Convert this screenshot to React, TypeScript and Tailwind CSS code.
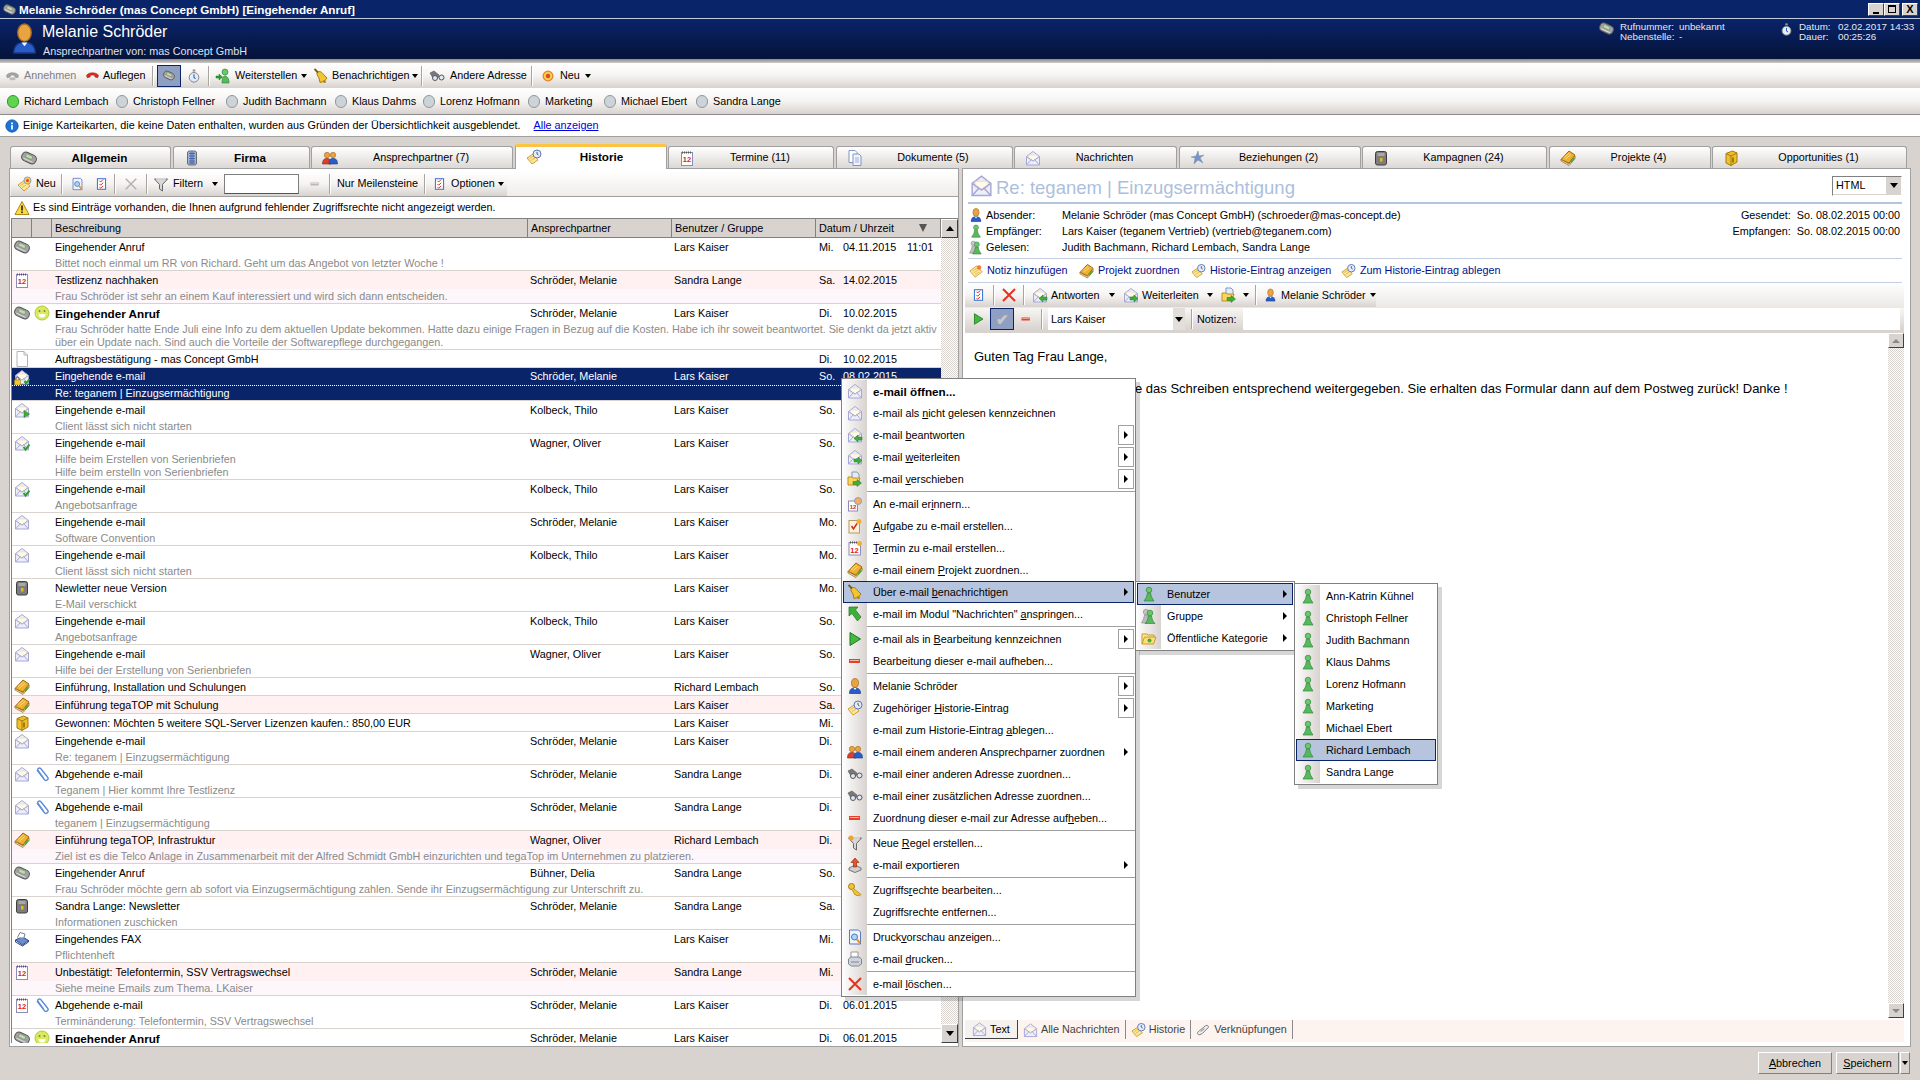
import type { ReactNode } from "react";

const DITHER = "bg-[repeating-conic-gradient(#d8d3cf_0_25%,#ffffff_0_50%)] bg-[length:2px_2px]";
const BAR = "bg-gradient-to-b from-white via-[#f6f4f2] to-[#d8d3cf]";

function Svg({ c = "h-4 w-4", children }: { c?: string; children: ReactNode }) {
  return (
    <svg viewBox="0 0 16 16" className={`${c} shrink-0`} aria-hidden="true">
      {children}
    </svg>
  );
}

type IconProps = { c?: string };

function Phone({ c }: IconProps) {
  return (
    <Svg c={c}>
      <g transform="rotate(25 8 8)">
        <rect x="0.500" y="3.500" width="15" height="9" rx="4" fill="#a3a3a3" stroke="#555" />
        <rect x="4" y="5" width="7" height="3.500" fill="#bcdcae" stroke="#6b7a64" strokeWidth=".5" />
        <path d="M3 10.500h10" stroke="#e4e4e4" />
      </g>
    </Svg>
  );
}

function Mail({ c, badge }: IconProps & { badge?: "reply" | "fwd" | "check" | "lock" | "play" }) {
  return (
    <Svg c={c}>
      <path d="M1.500 6.500 8 1.500l6.500 5V15h-13z" fill="#eceefb" stroke="#a7a7d6" />
      <path d="M3.500 5h9v4L8 11.500 3.500 9z" fill="#fff9e8" stroke="#d8d0b8" strokeWidth=".5" />
      <path d="M1.500 15 6.500 9.500M14.500 15 9.500 9.500M1.500 6.500 8 11l6.500-4.500" fill="none" stroke="#a7a7d6" />
      {badge === "reply" && <path d="M7 11.500 11 8v2h4v3h-4v2z" fill="#3fae3c" stroke="#1c7a1c" strokeWidth=".5" />}
      {badge === "fwd" && <path d="M15 11.500 11 8v2H7v3h4v2z" fill="#3fae3c" stroke="#1c7a1c" strokeWidth=".5" />}
      {badge === "play" && <path d="M10 8.500 15.500 12 10 15.500z" fill="#3fae3c" stroke="#1c7a1c" strokeWidth=".5" />}
      {badge === "check" && <path d="M9.500 12 11.500 14.500 15.500 9.500" fill="none" stroke="#27a02a" strokeWidth="2" />}
      {badge === "lock" && (
        <>
          <path d="M10.500 12 12 14.500 15.500 10" fill="none" stroke="#27a02a" strokeWidth="2" />
          <rect x="0.500" y="11" width="6" height="5" fill="#f2c82e" stroke="#a07c10" strokeWidth=".5" />
          <path d="M2 11V9.500a1.500 1.500 0 0 1 3 0V11" fill="none" stroke="#555" />
        </>
      )}
    </Svg>
  );
}

function Cal({ c }: IconProps) {
  return (
    <Svg c={c}>
      <rect x="2.500" y="2.500" width="11" height="13" fill="#fff" stroke="#8c8cb4" />
      <path d="M3 2.500h10" stroke="#555" strokeWidth="2" strokeDasharray="1 1" />
      <text x="8" y="12" fontSize="7.500" fontWeight="700" fill="#d22" textAnchor="middle" fontFamily="Liberation Sans, sans-serif">
        12
      </text>
    </Svg>
  );
}

function Doc({ c }: IconProps) {
  return (
    <Svg c={c}>
      <path d="M3 .5h7l3.500 3.500v11.500H3z" fill="#fff" stroke="#b4b4b4" />
      <path d="M10 .5V4h3.500" fill="none" stroke="#b4b4b4" />
    </Svg>
  );
}

function Book({ c }: IconProps) {
  return (
    <Svg c={c}>
      <path d="M1 9.500 9 1l6 4-6 8z" fill="#efb02e" stroke="#9b6a12" />
      <path d="M4 7.500 9.500 3M5.500 9 11 4.500" stroke="#f8dc8a" />
      <path d="M1 9.500 9 14l6-8v2.500L9 15.500 1 11z" fill="#fff" stroke="#9b6a12" strokeWidth=".8" />
      <path d="M11 12.500l3.500-4.500" stroke="#3fae3c" strokeWidth="1.500" />
    </Svg>
  );
}

function Box({ c }: IconProps) {
  return (
    <Svg c={c}>
      <rect x="2.500" y="1.500" width="11" height="13.500" rx="2" fill="#7d7d7d" stroke="#3e3e3e" />
      <rect x="4.500" y="3" width="7" height="3" fill="#a8a8a8" />
      <rect x="7" y="8" width="2.500" height="3.500" fill="#e8b820" />
    </Svg>
  );
}

function Cube({ c }: IconProps) {
  return (
    <Svg c={c}>
      <path d="M3 3.500 9.500 1 14 3v9l-6 3.500L3 13z" fill="#eec02a" stroke="#a37a10" />
      <path d="M3 3.500 8 6v9.500M8 6l6-3" fill="none" stroke="#a37a10" />
      <path d="M10 7.500v5" stroke="#8a6208" strokeWidth="1.500" />
    </Svg>
  );
}

function Fax({ c }: IconProps) {
  return (
    <Svg c={c}>
      <path d="M1.500 9 8 5.500l6.500 4-6 4.500z" fill="#6c8ccc" stroke="#2f4a86" />
      <path d="M3.500 6.500 6 1.500l5 1.500-1 3.500" fill="#fff" stroke="#808080" />
      <path d="M1.500 9v2l7 4 6-4V9" fill="none" stroke="#2f4a86" />
    </Svg>
  );
}

function Clip({ c }: IconProps) {
  return (
    <Svg c={c}>
      <path d="M9.500 12 4 4.500a1.700 1.700 0 0 1 2.700-2L13.500 11a2 2 0 0 1-3 2.700L3 4" fill="none" stroke="#5d8cd8" strokeWidth="1.400" />
    </Svg>
  );
}

function Smile({ c }: IconProps) {
  return (
    <Svg c={c}>
      <circle cx="8" cy="8" r="7" fill="#d9ea5e" stroke="#b2c83e" />
      <circle cx="5.500" cy="6" r="1" fill="#7c8a28" />
      <circle cx="10.500" cy="6" r="1" fill="#7c8a28" />
      <path d="M4.500 9h7a3.500 3.500 0 0 1-7 0z" fill="#fff" />
    </Svg>
  );
}

function Person({ c }: IconProps) {
  return (
    <Svg c={c}>
      <ellipse cx="8" cy="5" rx="3.500" ry="4.500" fill="#e8a343" stroke="#a8681c" strokeWidth=".7" />
      <path d="M2.500 15.500c0-4 2-5.500 5.500-5.500s5.500 1.500 5.500 5.500z" fill="#2a5cc8" stroke="#183a88" strokeWidth=".7" />
      <path d="M6.500 10 8 12l1.500-2z" fill="#fff" />
    </Svg>
  );
}

function Pawn({ c, gray }: IconProps & { gray?: boolean }) {
  return (
    <Svg c={c}>
      {gray && (
        <g transform="translate(-3 0)">
          <circle cx="8" cy="4" r="2.700" fill="#c4c4c4" stroke="#888" strokeWidth=".6" />
          <path d="M6.500 7h3l1 4 2 4h-9l2-4z" fill="#bcbcbc" stroke="#888" strokeWidth=".6" />
        </g>
      )}
      <g transform={gray ? "translate(1 1)" : undefined}>
        <circle cx="8" cy="4" r="2.800" fill="#6cc66c" stroke="#2e8a3e" strokeWidth=".7" />
        <path d="M6.500 7h3l1 4 2.500 4H3l2.500-4z" fill="#58b85c" stroke="#2e8a3e" strokeWidth=".7" />
      </g>
    </Svg>
  );
}

function People({ c }: IconProps) {
  return (
    <Svg c={c}>
      <circle cx="5" cy="5" r="2.700" fill="#e8a343" stroke="#a8681c" strokeWidth=".6" />
      <path d="M.500 14c0-4 1.500-5.500 4.500-5.500S9 10 9 14z" fill="#d8402c" stroke="#8a2418" strokeWidth=".6" />
      <circle cx="11" cy="5" r="2.700" fill="#e8a343" stroke="#a8681c" strokeWidth=".6" />
      <path d="M7 14c0-4 1-5.500 4-5.500s4.500 1.500 4.500 5.500z" fill="#2a5cc8" stroke="#183a88" strokeWidth=".6" />
    </Svg>
  );
}

function Bell({ c }: IconProps) {
  return (
    <Svg c={c}>
      <path d="M4 4.500C6.500 2.500 9 4 10.500 6.500L14 10c-1.500 2.500-4 4-7 4.500L6 10C4.500 8 3.500 6 4 4.500z" fill="#f2c430" stroke="#a87c10" />
      <path d="M1.500 1 5 4.500" stroke="#7a5a18" strokeWidth="1.800" />
      <circle cx="11.500" cy="13.500" r="1.500" fill="#b8860b" />
    </Svg>
  );
}

function Jump({ c }: IconProps) {
  return (
    <Svg c={c}>
      <path d="M2 1h9L8.500 4 14 11l-3.500 4L5 7.500 2 10z" fill="#3fae3c" stroke="#1c7a1c" strokeWidth=".7" />
    </Svg>
  );
}

function Play({ c }: IconProps) {
  return (
    <Svg c={c}>
      <path d="M3 1.500 13.500 8 3 14.500z" fill="#45b83f" stroke="#1c7a1c" />
    </Svg>
  );
}

function Minus({ c }: IconProps) {
  return (
    <Svg c={c}>
      <rect x="2" y="6" width="11" height="4" fill="#e8402a" />
      <rect x="3" y="7" width="9" height="1" fill="#f8b8a8" />
    </Svg>
  );
}

function Funnel({ c, spark }: IconProps & { spark?: boolean }) {
  return (
    <Svg c={c}>
      <path d="M1.500 3h13L9.500 8.500V15L6.500 13V8.500z" fill="#d8d8d8" stroke="#666" />
      <path d="M3 3h10" stroke="#fff" />
      {spark && <circle cx="4" cy="3" r="2.500" fill="#f2a030" />}
    </Svg>
  );
}

function Exporter({ c }: IconProps) {
  return (
    <Svg c={c}>
      <path d="M2 11 8 8l6 3v2l-6 2.500L2 13z" fill="#cfcfcf" stroke="#777" />
      <path d="M8 1l4 4.500H9.500V10h-3V5.500H4z" fill="#e2562a" stroke="#9a2e10" strokeWidth=".7" />
    </Svg>
  );
}

function Key({ c }: IconProps) {
  return (
    <Svg c={c}>
      <circle cx="4.500" cy="4.500" r="3" fill="#f2c430" stroke="#a87c10" />
      <path d="M6.500 6.500 14 12.500l-1.500 1.500-1.500-1-1 1-1-1.500-1 .5-3-5.500" fill="#f2c430" stroke="#a87c10" strokeWidth=".7" />
    </Svg>
  );
}

function Preview({ c }: IconProps) {
  return (
    <Svg c={c}>
      <path d="M2.500 1h9l2 2v12h-11z" fill="#eef3fc" stroke="#5c78b8" />
      <circle cx="7.500" cy="8" r="3" fill="#a8d8f4" stroke="#4a78b8" />
      <path d="M10 10.500l3 3.500" stroke="#e8902a" strokeWidth="2" />
    </Svg>
  );
}

function Printer({ c }: IconProps) {
  return (
    <Svg c={c}>
      <path d="M4 1h7v6H4z" fill="#fff" stroke="#999" />
      <path d="M1.500 8 4 6h8l2.500 2v5l-3 2h-7l-3-2z" fill="#cfd3da" stroke="#7f8690" />
      <path d="M4 11h8" stroke="#7f8690" />
    </Svg>
  );
}

function Cross({ c, gray }: IconProps & { gray?: boolean }) {
  return (
    <Svg c={c}>
      <path d="M2 2l12 12M14 2 2 14" stroke={gray ? "#b9b5b1" : "#e8301c"} strokeWidth="2" fill="none" />
    </Svg>
  );
}

function Binoculars({ c }: IconProps) {
  return (
    <Svg c={c}>
      <path d="M1 5l4-2 5 4-1 3-3-1-2 1z" fill="#77797e" stroke="#555" strokeWidth=".6" />
      <circle cx="6" cy="10" r="2.500" fill="#dfe8f4" stroke="#555" />
      <circle cx="12.500" cy="9.500" r="2.500" fill="#dfe8f4" stroke="#555" />
    </Svg>
  );
}

function Note({ c }: IconProps) {
  return (
    <Svg c={c}>
      <path d="M1 8 9 2l6 7-8 6z" fill="#fbe79a" stroke="#d0a030" />
      <path d="M4 8l5-3M5.500 10l5-3M7 12l5-3" stroke="#e0a030" strokeWidth=".7" />
      <circle cx="11.500" cy="4" r="2.500" fill="#f27a3a" />
    </Svg>
  );
}

function History({ c }: IconProps) {
  return (
    <Svg c={c}>
      <path d="M1 9 7 5l5 6-6 4z" fill="#fbe79a" stroke="#d0a030" />
      <path d="M3.500 9.500l4-2.500M5 11.500l4-2.500" stroke="#e0a030" strokeWidth=".7" />
      <circle cx="11" cy="5" r="4" fill="#e4ecf8" stroke="#5c78b8" />
      <path d="M11 2.800V5l1.500 1" fill="none" stroke="#334" strokeWidth=".8" />
    </Svg>
  );
}

function Checklist({ c }: IconProps) {
  return (
    <Svg c={c}>
      <rect x="3" y="1.500" width="10" height="13" fill="#fff" stroke="#3a78d8" strokeWidth="1.300" />
      <path d="M5.500 4l1.500 1.500L10 2.500M5.500 8l1.500 1.500L10 6.500M5.500 12l1.500 1L10 10.500" fill="none" stroke="#d8281c" strokeWidth="1.200" />
    </Svg>
  );
}

function FolderGo({ c }: IconProps) {
  return (
    <Svg c={c}>
      <path d="M5 1h5l2 2v5H5z" fill="#e4ecf8" stroke="#7f96c4" />
      <path d="M1 14V6h4l1 1h7l-2 7z" fill="#fbd65e" stroke="#bb9020" />
      <path d="M6 10.500h4V8.500l4.500 3.500L10 15.500v-2H6z" fill="#3fae3c" stroke="#1c7a1c" strokeWidth=".5" />
    </Svg>
  );
}

function Folder({ c }: IconProps) {
  return (
    <Svg c={c}>
      <path d="M1 14V4h5l1 1h6v2" fill="#fbe79a" stroke="#c89a28" />
      <path d="M1 14l2.500-7H15l-2.500 7z" fill="#fbdf7a" stroke="#c89a28" />
      <circle cx="8.500" cy="10.500" r="2" fill="#3fae3c" />
    </Svg>
  );
}

function Remind({ c }: IconProps) {
  return (
    <Svg c={c}>
      <rect x="1.500" y="5" width="9" height="10" fill="#fff" stroke="#8c8cb4" />
      <text x="6" y="13" fontSize="6" fontWeight="700" fill="#d22" textAnchor="middle" fontFamily="Liberation Sans, sans-serif">
        12
      </text>
      <circle cx="11" cy="5" r="3.500" fill="#f2b05a" stroke="#9a9ab8" />
    </Svg>
  );
}

function TaskNew({ c }: IconProps) {
  return (
    <Svg c={c}>
      <rect x="2" y="2.500" width="10.500" height="12.500" fill="#fbf2d8" stroke="#b09a70" />
      <path d="M4.500 8 6.500 11 10 5.500" fill="none" stroke="#d8281c" strokeWidth="1.500" />
      <circle cx="12" cy="3.500" r="2.500" fill="#f2b030" />
    </Svg>
  );
}

function CalNew({ c }: IconProps) {
  return (
    <Svg c={c}>
      <rect x="2" y="2.500" width="11.500" height="12.500" fill="#fff" stroke="#8c8cb4" />
      <path d="M3 2.500h8" stroke="#555" strokeWidth="2" strokeDasharray="1 1" />
      <text x="7.500" y="12.500" fontSize="7.500" fontWeight="700" fill="#d22" textAnchor="middle" fontFamily="Liberation Sans, sans-serif">
        12
      </text>
      <circle cx="12.500" cy="3.500" r="2.500" fill="#f2b030" />
    </Svg>
  );
}

function NewStar({ c }: IconProps) {
  return (
    <Svg c={c}>
      <circle cx="8" cy="8" r="5.500" fill="#f6d24a" stroke="#e8822a" strokeWidth="1.500" />
      <circle cx="8" cy="8" r="2.500" fill="#e8402a" />
    </Svg>
  );
}

function NewNote({ c }: IconProps) {
  return (
    <Svg c={c}>
      <path d="M1 9 8 4l5 6-6 5z" fill="#fbe79a" stroke="#d0a030" />
      <path d="M3.500 9.500l4-2.500M5 11.500l4-2.500" stroke="#e0a030" strokeWidth=".7" />
      <circle cx="10.500" cy="4.500" r="3.500" fill="#f6d24a" stroke="#8c9cc8" />
      <circle cx="10.500" cy="4.500" r="1.500" fill="#e8402a" />
    </Svg>
  );
}

function Hangup({ c, gray }: IconProps & { gray?: boolean }) {
  const col = gray ? "#a5a5a5" : "#dc2a1c";
  return (
    <Svg c={c}>
      <path d="M1.500 8C4 4 12 4 14.500 8l-1 2.500-3-1V8c-2-.8-3-.8-5 0v1.500l-3 1z" fill={col} stroke={gray ? "#777" : "#8a1a10"} strokeWidth=".5" />
      {gray && <rect x="5" y="10" width="6" height="3" fill="#bbb" />}
    </Svg>
  );
}

function Transfer({ c }: IconProps) {
  return (
    <Svg c={c}>
      <circle cx="10" cy="4" r="3" fill="#6cc66c" stroke="#2e8a3e" strokeWidth=".7" />
      <path d="M7 15c0-5 1-7 3-7s4 2 4 7z" fill="#58b85c" stroke="#2e8a3e" strokeWidth=".7" />
      <path d="M1 8h3V6l3.500 3L4 12v-2H1z" fill="#2aa02e" stroke="#1c7a1c" strokeWidth=".5" />
    </Svg>
  );
}

function Stopwatch({ c }: IconProps) {
  return (
    <Svg c={c}>
      <rect x="6.500" y="0.500" width="3" height="2.500" fill="#999" />
      <circle cx="8" cy="9.500" r="5.500" fill="#e4ecf8" stroke="#777" />
      <path d="M8 6v4l2 1" stroke="#2a5cc8" fill="none" strokeWidth="1.200" />
    </Svg>
  );
}

function Building({ c }: IconProps) {
  return (
    <Svg c={c}>
      <rect x="3.500" y="1" width="9" height="14" rx="2" fill="#9fb4dc" stroke="#6a6a6a" />
      <path d="M5 3.500h6M5 6h6M5 8.500h6M5 11h6M5 13h6M7 2v12M9 2v12" stroke="#3f5a9c" strokeWidth=".8" />
    </Svg>
  );
}

function Pages({ c }: IconProps) {
  return (
    <Svg c={c}>
      <path d="M2 .5h6l2 2v10H2z" fill="#fff" stroke="#7f96c4" />
      <path d="M6 4h6l2 2v9.500H6z" fill="#eef3fc" stroke="#7f96c4" />
      <path d="M8 8h4M8 10h4M8 12h4" stroke="#7f96c4" strokeWidth=".7" />
    </Svg>
  );
}

function Burst({ c }: IconProps) {
  return (
    <Svg c={c}>
      <path d="M8 1l1 5 5-1-4 3 3 5-5-3-4 4 1-6-4-1 5-1z" fill="#6f94d8" stroke="#8a8a8a" strokeWidth=".5" />
    </Svg>
  );
}

function Chain({ c }: IconProps) {
  return (
    <Svg c={c}>
      <path d="M2 12.500c-1-1 0-3 2-4l6-5c2-1 4 0 3 2l-6 6c-2 1.500-4 2-5 1z" fill="#eee" stroke="#777" />
      <path d="M5 9.500l4-3" stroke="#777" />
    </Svg>
  );
}

function Info({ c }: IconProps) {
  return (
    <Svg c={c}>
      <circle cx="8" cy="8" r="7" fill="#1c74d8" stroke="#0c4aa0" />
      <rect x="7" y="7" width="2" height="5" fill="#fff" />
      <rect x="7" y="4" width="2" height="2" fill="#fff" />
    </Svg>
  );
}

function Warn({ c }: IconProps) {
  return (
    <Svg c={c}>
      <path d="M8 1.500 15 14.500H1z" fill="#fbdc3c" stroke="#b08a10" />
      <rect x="7.200" y="5.500" width="1.600" height="5" fill="#222" />
      <rect x="7.200" y="11.500" width="1.600" height="1.600" fill="#222" />
    </Svg>
  );
}

function Arrow({ c = "border-t-black" }: { c?: string }) {
  return <span className={`inline-block h-0 w-0 shrink-0 border-x-[3px] border-t-[4px] border-x-transparent ${c}`} />;
}

function ArrowRight() {
  return <span className="inline-block h-0 w-0 border-y-[4px] border-l-[4px] border-y-transparent border-l-black" />;
}

function Sep({ c = "h-[20px]" }: { c?: string }) {
  return <span className={`block w-[2px] shrink-0 border-l border-r border-l-[#a8a49f] border-r-white ${c}`} />;
}

// "&" marks the mnemonic letter, same as the Windows resource strings
function Mnemonic({ text }: { text: string }) {
  const i = text.indexOf("&");
  if (i < 0) return <>{text}</>;
  return (
    <>
      {text.slice(0, i)}
      <u>{text[i + 1]}</u>
      {text.slice(i + 2)}
    </>
  );
}

function TitleBar() {
  return (
    <div className="flex h-[18px] shrink-0 items-center bg-[#0a246a] pl-[3px] pr-[2px]">
      <Phone c="h-[13px] w-[13px]" />
      <span className="ml-[3px] flex-1 text-[11.700px] font-bold text-white">Melanie Schröder (mas Concept GmbH) [Eingehender Anruf]</span>
      <div className="flex items-center">
        <WinBtn>
          <span className="mt-[7px] h-[2px] w-[6px] bg-black" />
        </WinBtn>
        <WinBtn>
          <span className="h-[8px] w-[8px] border border-t-2 border-black" />
        </WinBtn>
        <span className="w-[2px]" />
        <WinBtn>
          <span className="text-[11px] font-bold leading-none text-black">X</span>
        </WinBtn>
      </div>
    </div>
  );
}

function WinBtn({ children }: { children: ReactNode }) {
  return (
    <span className="flex h-[13px] w-[16px] items-center justify-center border border-b-[#404040] border-l-white border-r-[#404040] border-t-white bg-[#d8d3cf]">
      {children}
    </span>
  );
}

function Header() {
  return (
    <div className="flex h-[40px] shrink-0 bg-gradient-to-b from-[#0a246a] to-[#05133a] text-white">
      <Person c="ml-[9px] mt-[4px] h-[31px] w-[31px]" />
      <div className="ml-[2px] w-[1557px]">
        <div className="mt-[3px] h-[20px] text-[16px] leading-[20px]">Melanie Schröder</div>
        <div className="mt-[3px] pl-[1px] text-[10.800px] leading-[13px] text-[#dde3f0]">Ansprechpartner von: mas Concept GmbH</div>
      </div>
      <Phone c="mt-[2px] h-[15px] w-[15px]" />
      <div className="ml-[6px] mt-[3px] w-[160px] text-[9.800px] leading-[10px] text-[#e4e8f2]">
        <div className="flex h-[10px]"><span className="w-[59px]">Rufnummer:</span>unbekannt</div>
        <div className="flex h-[10px]"><span className="w-[59px]">Nebenstelle:</span>-</div>
      </div>
      <Stopwatch c="mt-[2px] h-[17px] w-[13px]" />
      <div className="ml-[6px] mt-[3px] text-[9.800px] leading-[10px] text-[#e4e8f2]">
        <div className="flex h-[10px]"><span className="w-[39px]">Datum:</span>02.02.2017 14:33</div>
        <div className="flex h-[10px]"><span className="w-[39px]">Dauer:</span>00:25:26</div>
      </div>
    </div>
  );
}

function TopToolbar() {
  return (
    <div className={`flex h-[25px] shrink-0 items-center whitespace-nowrap pl-[5px] ${BAR}`}>
      <div className="flex w-[80px] items-center gap-[4px] text-[#808080]"><Hangup gray c="h-[15px] w-[15px]" />Annehmen</div>
      <div className="flex w-[67px] items-center gap-[3px]"><Hangup c="h-[15px] w-[15px]" />Auflegen</div>
      <Sep />
      <span className="ml-[3px] flex h-[22px] w-[24px] items-center justify-center border border-[#0a246a] bg-[#8f9fc2]">
        <Phone c="h-[15px] w-[12px]" />
      </span>
      <span className="ml-[6px]"><Stopwatch c="h-4 w-[14px]" /></span>
      <span className="ml-[7px]"><Sep /></span>
      <div className="ml-[5px] flex w-[97px] items-center gap-[4px]"><Transfer />Weiterstellen <Arrow /></div>
      <div className="ml-[1px] flex w-[108px] items-center gap-[3px]"><Bell />Benachrichtigen <Arrow /></div>
      <Sep />
      <div className="ml-[6px] flex w-[102px] items-center gap-[5px]"><Binoculars />Andere Adresse</div>
      <Sep />
      <div className="ml-[8px] flex items-center gap-[5px]"><NewStar c="h-[14px] w-[14px]" />Neu <Arrow /></div>
    </div>
  );
}

const CONTACTS = [
  { name: "Richard Lembach", w: "w-[109px]", on: true },
  { name: "Christoph Fellner", w: "w-[110px]" },
  { name: "Judith Bachmann", w: "w-[109px]" },
  { name: "Klaus Dahms", w: "w-[88px]" },
  { name: "Lorenz Hofmann", w: "w-[105px]" },
  { name: "Marketing", w: "w-[76px]" },
  { name: "Michael Ebert", w: "w-[92px]" },
  { name: "Sandra Lange", w: "w-[90px]" },
];

function ContactBar() {
  return (
    <div className={`flex h-[27px] shrink-0 items-center border-b border-[#8a8a8a] pl-[7px] ${BAR}`}>
      {CONTACTS.map((p) => (
        <div key={p.name} className={`flex items-center gap-[5px] ${p.w}`}>
          <span
            className={`h-[13px] w-[12px] rounded-full border ${
              p.on ? "border-[#2e9a2e] bg-[#5fd44f]" : "border-[#8f979e] bg-[#ccd4da]"
            }`}
          />
          {p.name}
        </div>
      ))}
    </div>
  );
}

const TABS = [
  { label: "Allgemein", icon: <Phone />, w: "w-[161px]", bold: true },
  { label: "Firma", icon: <Building />, w: "w-[137px]", bold: true },
  { label: "Ansprechpartner (7)", icon: <People />, w: "w-[202px]" },
  { label: "Historie", icon: <History />, w: "w-[152px]", active: true },
  { label: "Termine (11)", icon: <Cal />, w: "w-[166px]" },
  { label: "Dokumente (5)", icon: <Pages />, w: "w-[177px]" },
  { label: "Nachrichten", icon: <Mail />, w: "w-[163px]" },
  { label: "Beziehungen (2)", icon: <Burst />, w: "w-[182px]" },
  { label: "Kampagnen (24)", icon: <Box />, w: "w-[185px]" },
  { label: "Projekte (4)", icon: <Book />, w: "w-[162px]" },
  { label: "Opportunities (1)", icon: <Cube />, w: "w-[195px]" },
];

function TabStrip() {
  return (
    <div className="flex h-[31px] shrink-0 items-end gap-[1.500px] pl-[10px]">
      {TABS.map((t) =>
        t.active ? (
          <div
            key={t.label}
            className={`relative z-10 -mb-px flex h-[25px] shrink-0 items-center rounded-t-[3px] border-x border-[#a0a0a0] border-t-[3px] border-t-[#fdc343] bg-white pb-[3px] pl-[10px] text-[11.700px] font-bold ${t.w}`}
          >
            {t.icon}
            <span className="flex-1 pr-[4px] text-center">{t.label}</span>
          </div>
        ) : (
          <div
            key={t.label}
            className={`flex h-[22px] shrink-0 items-center rounded-t-[3px] border-x border-t border-[#a0a0a0] bg-gradient-to-b from-white to-[#dcd8d4] pl-[10px] ${t.w} ${
              t.bold ? "text-[11.700px] font-bold" : ""
            }`}
          >
            {t.icon}
            <span className="flex-1 pr-[8px] text-center">{t.label}</span>
          </div>
        ),
      )}
    </div>
  );
}

type Row = {
  icon: ReactNode;
  icon2?: ReactNode;
  title: string;
  sub?: string[];
  contact?: string;
  user?: string;
  day: string;
  date?: string;
  time?: string;
  h: string;
  pink?: boolean;
  bold?: boolean;
  selected?: boolean;
};

const SM = "Schröder, Melanie";
const LK = "Lars Kaiser";
const SL = "Sandra Lange";
const RL = "Richard Lembach";
const KT = "Kolbeck, Thilo";
const WO = "Wagner, Oliver";

const ROWS: Row[] = [
  { icon: <Phone />, title: "Eingehender Anruf", sub: ["Bittet noch einmal um RR von Richard. Geht um das Angebot von letzter Woche !"], user: LK, day: "Mi.", date: "04.11.2015", time: "11:01", h: "h-[33px]" },
  { icon: <Cal />, title: "Testlizenz nachhaken", sub: ["Frau Schröder ist sehr an einem Kauf interessiert und wird sich dann entscheiden."], contact: SM, user: SL, day: "Sa.", date: "14.02.2015", h: "h-[33px]", pink: true },
  {
    icon: <Phone />,
    icon2: <Smile />,
    title: "Eingehender Anruf",
    sub: [
      "Frau Schröder hatte Ende Juli eine Info zu dem aktuellen Update bekommen. Hatte dazu einige Fragen in Bezug auf die Kosten. Habe ich ihr soweit beantwortet. Sie denkt da jetzt aktiv",
      "über ein Update nach. Sind auch die Vorteile der Softwarepflege durchgegangen.",
    ],
    contact: SM,
    user: LK,
    day: "Di.",
    date: "10.02.2015",
    h: "h-[46px]",
    bold: true,
  },
  { icon: <Doc />, title: "Auftragsbestätigung - mas Concept GmbH", day: "Di.", date: "10.02.2015", h: "h-[18px]" },
  { icon: <Mail badge="lock" />, title: "Eingehende e-mail", sub: ["Re: teganem | Einzugsermächtigung"], contact: SM, user: LK, day: "So.", date: "08.02.2015", h: "h-[33px]", selected: true },
  { icon: <Mail badge="play" />, title: "Eingehende e-mail", sub: ["Client lässt sich nicht starten"], contact: KT, user: LK, day: "So.", h: "h-[33px]" },
  { icon: <Mail badge="check" />, title: "Eingehende e-mail", sub: ["Hilfe beim Erstellen von Serienbriefen", "Hilfe beim erstelln von Serienbriefen"], contact: WO, user: LK, day: "So.", h: "h-[46px]" },
  { icon: <Mail badge="check" />, title: "Eingehende e-mail", sub: ["Angebotsanfrage"], contact: KT, user: LK, day: "So.", h: "h-[33px]" },
  { icon: <Mail />, title: "Eingehende e-mail", sub: ["Software Convention"], contact: SM, user: LK, day: "Mo.", h: "h-[33px]" },
  { icon: <Mail />, title: "Eingehende e-mail", sub: ["Client lässt sich nicht starten"], contact: KT, user: LK, day: "Mo.", h: "h-[33px]" },
  { icon: <Box />, title: "Newletter neue Version", sub: ["E-Mail verschickt"], user: LK, day: "Mo.", h: "h-[33px]" },
  { icon: <Mail />, title: "Eingehende e-mail", sub: ["Angebotsanfrage"], contact: KT, user: LK, day: "So.", h: "h-[33px]" },
  { icon: <Mail />, title: "Eingehende e-mail", sub: ["Hilfe bei der Erstellung von Serienbriefen"], contact: WO, user: LK, day: "So.", h: "h-[33px]" },
  { icon: <Book />, title: "Einführung, Installation und Schulungen", user: RL, day: "So.", h: "h-[18px]" },
  { icon: <Book />, title: "Einführung tegaTOP mit Schulung", user: LK, day: "Sa.", h: "h-[18px]", pink: true },
  { icon: <Cube />, title: "Gewonnen: Möchten 5 weitere SQL-Server Lizenzen kaufen.: 850,00 EUR", user: LK, day: "Mi.", h: "h-[18px]" },
  { icon: <Mail />, title: "Eingehende e-mail", sub: ["Re: teganem | Einzugsermächtigung"], contact: SM, user: LK, day: "Di.", h: "h-[33px]" },
  { icon: <Mail />, icon2: <Clip />, title: "Abgehende e-mail", sub: ["Teganem | Hier kommt Ihre Testlizenz"], contact: SM, user: SL, day: "Di.", h: "h-[33px]" },
  { icon: <Mail />, icon2: <Clip />, title: "Abgehende e-mail", sub: ["teganem | Einzugsermächtigung"], contact: SM, user: SL, day: "Di.", h: "h-[33px]" },
  { icon: <Book />, title: "Einführung tegaTOP, Infrastruktur", sub: ["Ziel ist es die Telco Anlage in Zusammenarbeit mit der Alfred Schmidt GmbH einzurichten und tegaTop im Unternehmen zu platzieren."], contact: WO, user: RL, day: "Di.", h: "h-[33px]", pink: true },
  { icon: <Phone />, title: "Eingehender Anruf", sub: ["Frau Schröder möchte gern ab sofort via Einzugsermächtigung zahlen. Sende ihr Einzugsermächtigung zur Unterschrift zu."], contact: "Bühner, Delia", user: SL, day: "So.", h: "h-[33px]" },
  { icon: <Box />, title: "Sandra Lange: Newsletter", sub: ["Informationen zuschicken"], contact: SM, user: SL, day: "Sa.", h: "h-[33px]" },
  { icon: <Fax />, title: "Eingehendes FAX", sub: ["Pflichtenheft"], user: LK, day: "Mi.", h: "h-[33px]" },
  { icon: <Cal />, title: "Unbestätigt: Telefontermin, SSV Vertragswechsel", sub: ["Siehe meine Emails zum Thema. LKaiser"], contact: SM, user: SL, day: "Mi.", h: "h-[33px]", pink: true },
  { icon: <Cal />, icon2: <Clip />, title: "Abgehende e-mail", sub: ["Terminänderung: Telefontermin, SSV Vertragswechsel"], contact: SM, user: LK, day: "Di.", date: "06.01.2015", h: "h-[33px]" },
  { icon: <Phone />, icon2: <Smile />, title: "Eingehender Anruf", contact: SM, user: LK, day: "Di.", date: "06.01.2015", h: "h-[18px]", bold: true },
];

function HistoryRow({ row }: { row: Row }) {
  const first = row.selected ? "bg-[#0a246a] text-white border-b border-dotted border-white" : row.pink ? "bg-[#fff0f2]" : "";
  const second = row.selected ? "bg-[#0a246a] text-white" : row.pink ? "bg-[#fdf6fa] text-[#8a8a8a]" : "text-[#8a8a8a]";
  return (
    <div className={`shrink-0 overflow-hidden border-b border-[#d8d3cf] ${row.h}`}>
      <div className={`flex h-[18px] items-center ${first}`}>
        <span className="w-[20px] shrink-0 pl-[2px]">{row.icon}</span>
        <span className="w-[20px] shrink-0 pl-[2px]">{row.icon2}</span>
        <span className={`w-[476px] shrink-0 pl-[3px] ${row.bold ? "text-[11.700px] font-bold" : ""}`}>{row.title}</span>
        <span className="w-[144px] shrink-0 pl-[2px]">{row.contact}</span>
        <span className="w-[144px] shrink-0 pl-[2px]">{row.user}</span>
        <span className="flex pl-[3px]">
          <span className="w-[24px]">{row.day}</span>
          <span className="w-[64px]">{row.date}</span>
          <span>{row.time}</span>
        </span>
      </div>
      {row.sub && (
        <div className={`h-full pl-[43px] pt-[1px] ${second}`}>
          {row.sub.map((line) => (
            <div key={line} className="h-[13px] whitespace-nowrap leading-[13px]">{line}</div>
          ))}
        </div>
      )}
    </div>
  );
}

function HistoryToolbar() {
  return (
    <div className="flex h-[26px] shrink-0 whitespace-nowrap border-b border-[#a0a0a0] bg-gradient-to-b from-white to-[#f0ede9] pl-px">
      <div className={`flex h-[25px] w-[496px] items-center pl-[6px] ${BAR}`}>
        <NewNote c="h-[16px] w-[16px]" />
        <span className="ml-[3px] w-[18px]">Neu</span>
        <span className="ml-[7px]"><Sep /></span>
        <Preview c="ml-[8px] h-4 w-[13px]" />
        <Checklist c="ml-[11px] h-4 w-[13px]" />
        <span className="ml-[6px]"><Sep /></span>
        <Cross gray c="ml-[8px] h-4 w-[14px]" />
        <span className="ml-[8px]"><Sep /></span>
        <Funnel c="ml-[5px] h-4 w-4" />
        <span className="ml-[4px] w-[29px]">Filtern</span>
        <span className="ml-[10px] flex"><Arrow /></span>
        <span className="ml-[6px] h-[20px] w-[75px] shrink-0 border border-[#7f7f7f] border-b-[#555] bg-white" />
        <Minus c="ml-[10px] h-3 w-3 opacity-40 grayscale" />
        <span className="ml-[8px]"><Sep /></span>
        <span className="ml-[6px] w-[79px]">Nur Meilensteine</span>
        <span className="ml-[8px]"><Sep /></span>
        <Checklist c="ml-[7px] h-4 w-[13px]" />
        <span className="ml-[5px] w-[44px]">Optionen</span>
        <span className="ml-[3px] flex"><Arrow /></span>
      </div>
    </div>
  );
}

function HeaderCell({ w, children }: { w: string; children?: ReactNode }) {
  return (
    <div className={`flex h-full items-center border-b border-r border-b-[#808080] border-r-[#808080] border-l-white bg-[#d8d3cf] pl-[3px] ${w}`}>
      {children}
    </div>
  );
}

function ScrollBtn({ down, light }: { down?: boolean; light?: boolean }) {
  return (
    <span
      className={`flex shrink-0 items-center justify-center border border-b-[#404040] border-l-white border-r-[#404040] border-t-white bg-[#d8d3cf] ${
        light ? "h-[15px] w-full" : "h-[19px] w-full"
      }`}
    >
      <span
        className={`h-0 w-0 border-x-[4px] border-x-transparent ${
          down
            ? light ? "border-t-[4px] border-t-[#8a8a8a]" : "border-t-[5px] border-t-black"
            : light ? "border-b-[4px] border-b-[#8a8a8a]" : "border-b-[5px] border-b-black"
        }`}
      />
    </span>
  );
}

function HistoryPanel() {
  return (
    <section className="flex h-full w-[950px] shrink-0 flex-col overflow-hidden border border-[#a0a0a0] bg-white pt-[2px]">
      <HistoryToolbar />
      <div className="flex h-[21px] shrink-0 items-center pl-[4px]">
        <Warn />
        <span className="ml-[3px]">Es sind Einträge vorhanden, die Ihnen aufgrund fehlender Zugriffsrechte nicht angezeigt werden.</span>
      </div>
      <div className="ml-px mr-0 flex min-h-0 flex-1 border-t border-[#808080] pb-[3px]">
        <div className="flex min-w-0 flex-1 flex-col border-l border-[#808080] pl-0">
          <div className="flex h-[19px] shrink-0">
            <HeaderCell w="w-[20px]" />
            <HeaderCell w="w-[20px]" />
            <HeaderCell w="w-[476px]">Beschreibung</HeaderCell>
            <HeaderCell w="w-[144px]">Ansprechpartner</HeaderCell>
            <HeaderCell w="w-[144px]">Benutzer / Gruppe</HeaderCell>
            <HeaderCell w="flex-1">
              Datum / Uhrzeit
              <span className="ml-[25px] h-0 w-0 border-x-[4px] border-t-[8px] border-x-transparent border-t-[#555]" />
            </HeaderCell>
          </div>
          <div className="flex min-h-0 flex-1 flex-col overflow-hidden">
            {ROWS.map((r, i) => (
              <HistoryRow key={i} row={r} />
            ))}
          </div>
        </div>
        <div className="flex w-[17px] shrink-0 flex-col">
          <ScrollBtn />
          <div className={`flex-1 ${DITHER}`} />
          <ScrollBtn down />
        </div>
      </div>
    </section>
  );
}

function EmailToolbars() {
  return (
    <div className="shrink-0 whitespace-nowrap bg-[#d8d3cf]">
      <div className="flex h-[25px] bg-gradient-to-b from-white to-[#ebe8e5]">
        <div className={`flex h-[24px] w-[411px] items-center pl-[7px] ${BAR}`}>
          <Checklist c="h-4 w-[13px]" />
          <span className="ml-[8px]"><Sep /></span>
          <Cross c="ml-[6px] h-4 w-4" />
          <span className="ml-[6px]"><Sep /></span>
          <Mail badge="reply" c="ml-[7px] h-4 w-4" />
          <span className="ml-[3px] w-[52px]">Antworten</span>
          <span className="ml-[6px] flex"><Arrow /></span>
          <Mail badge="fwd" c="ml-[8px] h-4 w-4" />
          <span className="ml-[3px] w-[59px]">Weiterleiten</span>
          <span className="ml-[6px] flex"><Arrow /></span>
          <FolderGo c="ml-[8px] h-4 w-4" />
          <span className="ml-[6px] flex"><Arrow /></span>
          <span className="ml-[6px]"><Sep /></span>
          <Person c="ml-[7px] h-4 w-[13px]" />
          <span className="ml-[4px] w-[83px]">Melanie Schröder</span>
          <span className="ml-[6px] flex"><Arrow /></span>
        </div>
      </div>
      <div className="flex h-[25px] pb-[3px]">
        <div className="flex h-[22px] flex-1 items-center bg-gradient-to-b from-[#f8f6f4] to-[#d8d3cf] pl-[7px] pr-[4px]">
          <Play c="h-4 w-[13px]" />
          <span className="ml-[5px] flex h-[22px] w-[24px] items-center justify-center border border-[#0a246a] bg-[#8f9fc2] text-[15px] font-bold text-[#c8c8c8]">✔</span>
          <Minus c="ml-[6px] h-3 w-3" />
          <span className="ml-[9px]"><Sep /></span>
          <div className="ml-[5px] flex h-[22px] w-[137px] items-center justify-between bg-white pl-[3px]">
            Lars Kaiser
            <span className="flex h-[22px] w-[12px] items-center justify-center bg-[#e2dfdb]"><span className="h-0 w-0 border-x-[4px] border-t-[5px] border-x-transparent border-t-black" /></span>
          </div>
          <span className="ml-[6px]"><Sep /></span>
          <span className="ml-[4px] w-[46px]">Notizen:</span>
          <span className="h-[22px] flex-1 bg-white" />
        </div>
      </div>
    </div>
  );
}

function BottomTab({ icon, label, active }: { icon: ReactNode; label: string; active?: boolean }) {
  if (active) {
    return (
      <div className="flex h-[19px] w-[53px] items-center gap-[3px] border-b border-r border-[#404040] bg-[#f4f1ee] pl-[7px]">
        {icon}
        {label}
      </div>
    );
  }
  return (
    <div className="ml-[4px] flex h-[19px] items-center gap-[3px] border-r border-[#8a8a8a] pr-[5px] text-[#444]">
      <span className="ml-[1px]">{icon}</span>
      {label}
    </div>
  );
}

function EmailPanel() {
  return (
    <section className="flex h-full flex-1 flex-col overflow-hidden border border-[#a0a0a0] bg-white pb-[4px] pl-[2px] pr-[6px]">
      <div className="flex h-[33px] shrink-0 items-center pl-[5px] pr-[2px]">
        <Mail c="h-[23px] w-[23px]" />
        <span className="ml-[3px] flex-1 pt-[3px] text-[18.500px] text-[#adbfdb]">Re: teganem | Einzugsermächtigung</span>
        <span className="flex h-[20px] w-[70px] items-center justify-between border border-b-white border-l-[#808080] border-r-white border-t-[#808080] bg-white pl-[3px] shadow-[inset_-1px_-1px_0_#d8d3cf]">
          HTML
          <span className="flex h-[18px] w-[15px] items-center justify-center bg-[#d8d3cf]"><span className="h-0 w-0 border-x-[4px] border-t-[5px] border-x-transparent border-t-black" /></span>
        </span>
      </div>
      <div className="ml-[3px] h-[2px] w-[934px] shrink-0 bg-[#b4c6de]" />
      <div className="shrink-0 px-[4px] pb-[3px] pt-[3px]">
        <div className="flex h-[16px] items-center">
          <Person c="h-4 w-[14px]" />
          <span className="ml-[3px] w-[76px]">Absender:</span>
          <span className="flex-1">Melanie Schröder (mas Concept GmbH) (schroeder@mas-concept.de)</span>
          <span>Gesendet:&nbsp; So. 08.02.2015 00:00</span>
        </div>
        <div className="flex h-[16px] items-center">
          <Pawn c="h-4 w-[14px]" />
          <span className="ml-[3px] w-[76px]">Empfänger:</span>
          <span className="flex-1">Lars Kaiser (teganem Vertrieb) (vertrieb@teganem.com)</span>
          <span>Empfangen:&nbsp; So. 08.02.2015 00:00</span>
        </div>
        <div className="flex h-[16px] items-center">
          <Pawn gray c="h-4 w-[14px]" />
          <span className="ml-[3px] w-[76px]">Gelesen:</span>
          <span className="flex-1">Judith Bachmann, Richard Lembach, Sandra Lange</span>
        </div>
      </div>
      <div className="ml-[3px] flex h-[25px] w-[934px] shrink-0 items-center border-y border-y-[#c4d0e2] pl-px text-[#000f8a]">
        <Note c="h-4 w-[14px]" />
        <span className="ml-[4px] w-[92px]">Notiz hinzufügen</span>
        <Book c="h-4 w-[15px]" />
        <span className="ml-[4px] w-[93px]">Projekt zuordnen</span>
        <History c="h-4 w-[15px]" />
        <span className="ml-[4px] w-[131px]">Historie-Eintrag anzeigen</span>
        <History c="h-4 w-[15px]" />
        <span className="ml-[4px]">Zum Historie-Eintrag ablegen</span>
      </div>
      <EmailToolbars />
      <div className="flex min-h-0 flex-1">
        <div className="min-w-0 flex-1 pl-[9px] text-[13px] leading-[15px]">
          <p className="mt-[16px]">Guten Tag Frau Lange,</p>
          <p className="mt-[17px] whitespace-nowrap pl-[161px]">e das Schreiben entsprechend weitergegeben. Sie erhalten das Formular dann auf dem Postweg zurück! Danke !</p>
        </div>
        <div className={`flex w-[16px] shrink-0 flex-col ${DITHER}`}>
          <ScrollBtn light />
          <div className="flex-1" />
          <ScrollBtn down light />
        </div>
      </div>
      <div className="mt-[2px] flex h-[22px] shrink-0 items-start border-t-0 bg-[#fdf4f0]">
        <BottomTab active icon={<Mail c="h-4 w-[15px]" />} label="Text" />
        <BottomTab icon={<Mail c="h-4 w-[15px]" />} label="Alle Nachrichten" />
        <BottomTab icon={<History c="h-4 w-[15px]" />} label="Historie" />
        <BottomTab icon={<Chain c="h-4 w-[15px]" />} label="Verknüpfungen" />
      </div>
    </section>
  );
}

type Entry = {
  label: string;
  icon?: ReactNode;
  bold?: boolean;
  active?: boolean;
  arrow?: "box" | "plain";
};

const MAIN_MENU: (Entry | "sep")[] = [
  { label: "e-mail öffnen...", icon: <Mail />, bold: true },
  { label: "e-mail als &nicht gelesen kennzeichnen", icon: <Mail /> },
  { label: "e-mail &beantworten", icon: <Mail badge="reply" />, arrow: "box" },
  { label: "e-mail &weiterleiten", icon: <Mail badge="fwd" />, arrow: "box" },
  { label: "e-mail &verschieben", icon: <FolderGo />, arrow: "box" },
  "sep",
  { label: "An e-mail er&innern...", icon: <Remind /> },
  { label: "&Aufgabe zu e-mail erstellen...", icon: <TaskNew /> },
  { label: "&Termin zu e-mail erstellen...", icon: <CalNew /> },
  { label: "e-mail einem &Projekt zuordnen...", icon: <Book /> },
  { label: "Über e-mail &benachrichtigen", icon: <Bell />, active: true, arrow: "plain" },
  { label: 'e-mail im Modul "Nachrichten" &anspringen...', icon: <Jump /> },
  "sep",
  { label: "e-mail als in &Bearbeitung kennzeichnen", icon: <Play />, arrow: "box" },
  { label: "Bearbeitung dieser e-mail aufheben...", icon: <Minus /> },
  "sep",
  { label: "Melanie Schröder", icon: <Person />, arrow: "box" },
  { label: "Zugehöriger &Historie-Eintrag", icon: <History />, arrow: "box" },
  { label: "e-mail zum Historie-Eintrag &ablegen..." },
  { label: "e-mail einem anderen Ansprechparner zuordnen", icon: <People />, arrow: "plain" },
  { label: "e-mail einer anderen Adresse zuordnen...", icon: <Binoculars /> },
  { label: "e-mail einer zusätzlichen Adresse zuordnen...", icon: <Binoculars /> },
  { label: "Zuordnung dieser e-mail zur Adresse auf&heben...", icon: <Minus /> },
  "sep",
  { label: "Neue &Regel erstellen...", icon: <Funnel spark /> },
  { label: "e-mail exportieren", icon: <Exporter />, arrow: "plain" },
  "sep",
  { label: "Zugriffs&rechte bearbeiten...", icon: <Key /> },
  { label: "Zugriffsrechte entfernen...", },
  "sep",
  { label: "Druck&vorschau anzeigen...", icon: <Preview /> },
  { label: "e-mail &drucken...", icon: <Printer /> },
  "sep",
  { label: "e-mail &löschen...", icon: <Cross /> },
];

const NOTIFY_MENU: Entry[] = [
  { label: "Benutzer", icon: <Pawn />, active: true, arrow: "plain" },
  { label: "Gruppe", icon: <Pawn gray />, arrow: "plain" },
  { label: "Öffentliche Kategorie", icon: <Folder />, arrow: "plain" },
];

const USER_MENU: Entry[] = [
  { label: "Ann-Katrin Kühnel", icon: <Pawn /> },
  { label: "Christoph Fellner", icon: <Pawn /> },
  { label: "Judith Bachmann", icon: <Pawn /> },
  { label: "Klaus Dahms", icon: <Pawn /> },
  { label: "Lorenz Hofmann", icon: <Pawn /> },
  { label: "Marketing", icon: <Pawn /> },
  { label: "Michael Ebert", icon: <Pawn /> },
  { label: "Richard Lembach", icon: <Pawn />, active: true },
  { label: "Sandra Lange", icon: <Pawn /> },
];

function MenuRow({ entry, strip }: { entry: Entry; strip: string }) {
  return (
    <div className={`relative flex h-[22px] items-center ${entry.bold ? "text-[11.700px] font-bold" : ""}`}>
      <span className={`flex h-full shrink-0 items-center justify-center ${strip}`}>{entry.icon}</span>
      {entry.active && <span className="absolute inset-x-[1px] inset-y-0 border border-[#0a246a] bg-[#b6c4dd]" />}
      {entry.active && <span className={`absolute left-0 flex h-full items-center justify-center ${strip} !bg-none`}>{entry.icon}</span>}
      <span className="relative ml-[6px] flex-1 whitespace-nowrap"><Mnemonic text={entry.label} /></span>
      {entry.arrow === "box" && (
        <span className="mr-[1px] flex h-[20px] w-[16px] items-center justify-center border border-[#a0a0a0]">
          <ArrowRight />
        </span>
      )}
      {entry.arrow === "plain" && (
        <span className="relative mr-[6px] flex w-[6px] justify-center">
          <ArrowRight />
        </span>
      )}
    </div>
  );
}

function PopupMenu({ entries, box, strip }: { entries: (Entry | "sep")[]; box: string; strip: string }) {
  return (
    <div className={`absolute z-20 border border-[#808080] bg-white py-px shadow-[4px_4px_0_rgba(0,0,0,0.16)] ${box}`}>
      {entries.map((e, i) =>
        e === "sep" ? (
          <div key={i} className="flex h-[3px]">
            <span className={`h-full shrink-0 ${strip}`} />
            <span className="mt-px h-px flex-1 bg-[#a0a0a0]" />
          </div>
        ) : (
          <MenuRow key={i} entry={e} strip={strip} />
        ),
      )}
    </div>
  );
}

const STRIP_MAIN = "w-[25px] bg-gradient-to-r from-white to-[#d8d3cf]";

export default function App() {
  return (
    <div className="relative flex h-[1080px] w-[1920px] flex-col overflow-hidden bg-[#d8d3cf] text-[10.800px] leading-[13px] text-black [font-family:'Liberation_Sans',Arial,sans-serif]">
      <TitleBar />
      <div className="h-px shrink-0 bg-[#c4cbdc]" />
      <Header />
      <div className="h-[4px] shrink-0 bg-gradient-to-b from-[#8a8a8a] to-[#d0ccc8]" />
      <TopToolbar />
      <ContactBar />
      <div className="flex h-[22px] shrink-0 items-center border-b border-[#a0a0a0] bg-white pl-[5px]">
        <Info c="h-[14px] w-[14px]" />
        <span className="ml-[4px]">Einige Karteikarten, die keine Daten enthalten, wurden aus Gründen der Übersichtlichkeit ausgeblendet.</span>
        <span className="ml-[13px] text-[#0000e0] underline">Alle anzeigen</span>
      </div>
      <TabStrip />
      <div className="flex min-h-0 flex-1 gap-[3px] pl-[9px] pr-[9px]">
        <HistoryPanel />
        <EmailPanel />
      </div>
      <div className="flex h-[33px] shrink-0 items-start justify-end pr-[10px] pt-[5px]">
        <button className="h-[22px] w-[74px] border border-b-[#808080] border-l-white border-r-[#808080] border-t-white"><Mnemonic text="&Abbrechen" /></button>
        <button className="ml-[4px] h-[22px] w-[63px] border border-b-[#808080] border-l-white border-r-[#808080] border-t-white"><Mnemonic text="&Speichern" /></button>
        <button className="ml-px flex h-[22px] w-[10px] items-center justify-center border border-b-[#808080] border-l-white border-r-[#808080] border-t-white"><Arrow /></button>
      </div>

      <PopupMenu entries={MAIN_MENU} box="left-[841px] top-[378px] w-[295px]" strip={STRIP_MAIN} />
      <PopupMenu entries={NOTIFY_MENU} box="left-[1135px] top-[581px] w-[160px]" strip={STRIP_MAIN} />
      <PopupMenu entries={USER_MENU} box="left-[1294px] top-[583px] w-[144px]" strip={STRIP_MAIN} />
    </div>
  );
}
